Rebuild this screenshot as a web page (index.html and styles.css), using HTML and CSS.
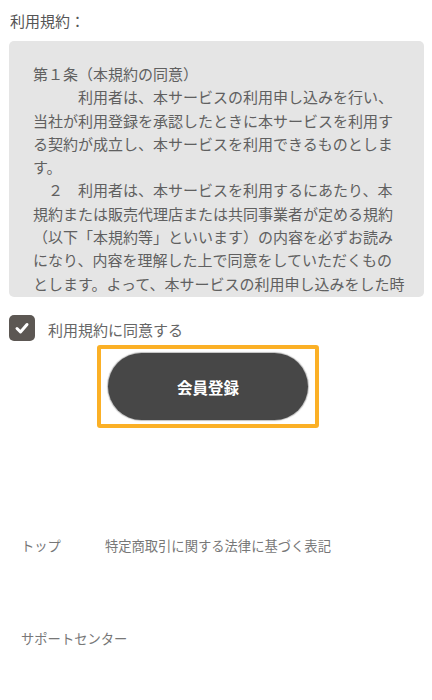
FILE: index.html
```html
<!DOCTYPE html>
<html lang="ja">
<head>
<meta charset="utf-8">
<link rel="stylesheet" href="styles.css">
</head>
<body>
<div class="page">
  <div class="label">利用規約：</div>
  <div class="terms">
    <p>第１条（本規約の同意）</p>
    <p>　　　利用者は、本サービスの利用申し込みを行い、当社が利用登録を承認したときに本サービスを利用する契約が成立し、本サービスを利用できるものとします。</p>
    <p>　２　利用者は、本サービスを利用するにあたり、本規約または販売代理店または共同事業者が定める規約（以下「本規約等」といいます）の内容を必ずお読みになり、内容を理解した上で同意をしていただくものとします。よって、本サービスの利用申し込みをした時点で、本規約等に同意したものとみなします。</p>
  </div>
  <label class="agree">
    <span class="checkbox">
      <svg width="16" height="16" viewBox="0 0 16 16"><polyline points="3,8.5 6.5,12 13,4.5" fill="none" stroke="#fff" stroke-width="3" stroke-linecap="round" stroke-linejoin="round"/></svg>
    </span>
    <span class="agree-text">利用規約に同意する</span>
  </label>
  <div class="focus-frame">
    <button class="submit">会員登録</button>
  </div>
  <nav class="footer">
    <div class="footer-row">
      <a class="link">トップ</a>
      <a class="link">特定商取引に関する法律に基づく表記</a>
    </div>
    <div class="footer-row">
      <a class="link">サポートセンター</a>
    </div>
  </nav>
</div>
</body>
</html>
```
FILE: styles.css
```css
html, body {
  margin: 0;
  padding: 0;
  background: #fff;
}
body {
  font-family: "Noto Sans CJK JP", "Noto Sans", sans-serif;
  color: #555;
}
.page {
  display: flex;
  flex-direction: column;
  align-items: flex-start;
}
.label {
  font-size: 15px;
  line-height: 23px;
  padding: 9px 0 0 10px;
  color: #555;
}
.terms {
  margin: 9px 0 0 9px;
  width: 415px;
  height: 256px;
  box-sizing: border-box;
  padding: 21px 18px 0 24px;
  background: #e5e5e5;
  border-radius: 5px;
  overflow: hidden;
  font-size: 15px;
  line-height: 23.3px;
  color: #606060;
}
.terms p {
  margin: 0;
  max-width: 372px;
}
.agree {
  display: flex;
  align-items: center;
  gap: 13px;
  margin: 18px 0 0 9px;
}
.checkbox {
  width: 26px;
  height: 26px;
  border-radius: 5px;
  background: #5c5753;
  display: flex;
  align-items: center;
  justify-content: center;
}
.agree-text {
  font-size: 15px;
  line-height: 23px;
  color: #666;
  margin-top: 2px;
}
.focus-frame {
  margin: 4px 0 0 97px;
  border: 4px solid #fbb026;
  border-radius: 3px;
  padding: 4px 7px;
  display: flex;
}
.submit {
  width: 200px;
  height: 67px;
  border: none;
  border-radius: 34px;
  background: #474747;
  color: #fff;
  font-family: "Noto Sans CJK JP", "Noto Sans", sans-serif;
  font-size: 15.5px;
  font-weight: bold;
  box-shadow: 0 0 1px 1px rgba(0,0,0,0.25);
}
.footer {
  margin: 108px 0 0 21px;
  display: flex;
  flex-direction: column;
  gap: 73px;
}
.footer-row {
  display: flex;
  gap: 44px;
}
.link {
  font-size: 13.3px;
  line-height: 20px;
  color: #777;
}
```
